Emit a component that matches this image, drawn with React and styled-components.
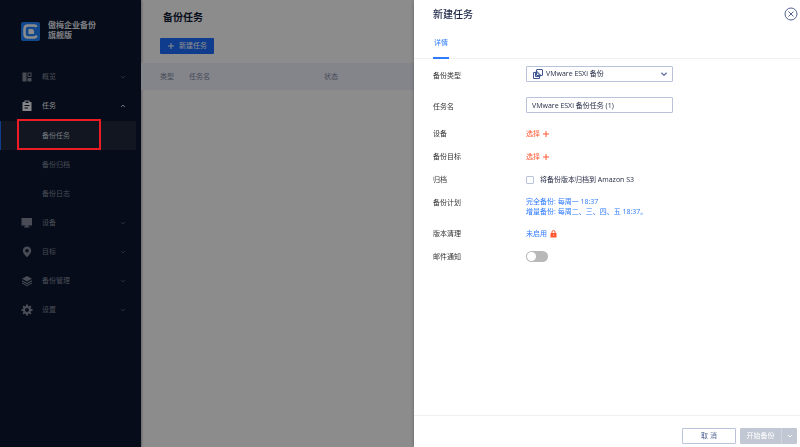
import React, {useState} from "react";
import styled, {createGlobalStyle} from "styled-components";


/* 侧边栏菜单 */
const menus = [
    { id : 'overview', name : '概览', icon : 'overview' },
    { id : 'task', name : '任务', icon : 'task', children : ['备份任务', '备份归档', '备份日志'] },
    { id : 'device', name : '设备', icon : 'device' },
    { id : 'target', name : '目标', icon : 'target' },
    { id : 'manage', name : '备份管理', icon : 'manage' },
    { id : 'setting', name : '设置', icon : 'setting' },
];


const MenuIcon = ({name}) => (
    <svg width="12" height="12" viewBox="0 0 24 24" fill="currentColor" aria-hidden="true">
        {name === 'overview' && (
            <>
                <path d="M3 3h8v18H3z"/>
                <path d="M13 3h8v9h-8zM15 5v5h4V5z" fillRule="evenodd"/>
                <path d="M13 14h8v7h-8z"/>
            </>
        )}
        {name === 'task' && (
            <path fillRule="evenodd" d="M3 4h4V1h10v3h4v18H3zM9 3v3h6V3zM7 10v2h10v-2zM7 15v2h7v-2z"/>
        )}
        {name === 'device' && (
            <path d="M1 2h21v15h-8v2h3v2H6v-2h3v-2H1z"/>
        )}
        {name === 'target' && (
            <path fillRule="evenodd" d="M12 1a8.500 8.500 0 0 0-8.500 8.500C3.500 15 12 22.500 12 22.500S20.500 15 20.500 9.500A8.500 8.500 0 0 0 12 1zm0 5a3.500 3.500 0 1 1 0 7 3.500 3.500 0 0 1 0-7z"/>
        )}
        {name === 'manage' && (
            <>
                <path d="M12 2 22 7.500 12 13 2 7.500z"/>
                <path d="M2 10.500 12 16 22 10.500v2.500L12 18.500 2 13z"/>
                <path d="M2 15 12 20.500 22 15v2L12 22.500 2 17z"/>
            </>
        )}
        {name === 'setting' && (
            <>
                <circle cx="12" cy="12" r="6" fill="none" stroke="currentColor" strokeWidth="4"/>
                <path d="M12 1v4M12 19v4M1 12h4M19 12h4M4.200 4.200l3 3M16.800 16.800l3 3M4.200 19.800l3-3M16.800 7.200l3-3" fill="none" stroke="currentColor" strokeWidth="4"/>
            </>
        )}
    </svg>
);

const Chevron = ({up, size = 6}) => (
    <svg width={size} height={size} viewBox="0 0 12 12" fill="none" stroke="currentColor" strokeWidth="2" aria-hidden="true">
        <path d={up ? "M2 8l4-4 4 4" : "M2 4l4 4 4-4"}/>
    </svg>
);

const Plus = () => (
    <svg width="8" height="8" viewBox="0 0 8 8" fill="none" stroke="currentColor" aria-hidden="true">
        <path d="M4 1v6M1 4h6"/>
    </svg>
);


const Sidebar = ({current, onSelect}) => (
    <SidebarBox>
        <Brand>
            <svg width="19" height="19" viewBox="0 0 38 38" aria-hidden="true">
                <rect width="38" height="38" rx="4" fill="#1f86ff"/>
                <path d="M31 10Q30 7 26 7H14Q7 7 7 14v10q0 7 7 7h12q4 0 5-4" fill="none" stroke="#fff" strokeWidth="5"/>
                <path d="M15 14h8l3 3v7H15z" fill="#fff"/>
            </svg>
            <BrandName>
                <span>傲梅企业备份</span>
                <span>旗舰版</span>
            </BrandName>
        </Brand>
        <nav>
            {menus.map((menu) => (
                <React.Fragment key={menu.id}>
                    <MenuButton type="button" $open={!!menu.children}>
                        <MenuIcon name={menu.icon}/>
                        <span>{menu.name}</span>
                        <Chevron up={!!menu.children}/>
                    </MenuButton>
                    {menu.children && (
                        <SubMenu>
                            {menu.children.map((child) => (
                                <SubItem key={child}>
                                    <SubLink href="#" $active={child === current} onClick={() => onSelect(child)}>{child}</SubLink>
                                    {child === '备份任务' && <Highlight/>}
                                </SubItem>
                            ))}
                        </SubMenu>
                    )}
                </React.Fragment>
            ))}
        </nav>
    </SidebarBox>
);


const TaskList = () => (
    <Main>
        <PageTitle>备份任务</PageTitle>
        <NewTaskButton type="button"><Plus/>新建任务</NewTaskButton>
        <TaskTable>
            <thead>
                <tr>
                    <TypeCell>类型</TypeCell>
                    <NameCell>任务名</NameCell>
                    <th>状态</th>
                </tr>
            </thead>
        </TaskTable>
    </Main>
);


const NewTaskDrawer = () => {

    const [taskName, setTaskName] = useState('VMware ESXi 备份任务 (1)');
    const [archive, setArchive] = useState(false);
    const [mailNotice, setMailNotice] = useState(false);

    return(
        <Drawer role="dialog" aria-labelledby="drawerTitle">
            <DrawerHeader>
                <DrawerTitle id="drawerTitle">新建任务</DrawerTitle>
                <CloseButton type="button" aria-label="关闭">
                    <svg width="14" height="14" viewBox="0 0 28 28" fill="none" stroke="currentColor" strokeWidth="2">
                        <circle cx="14" cy="14" r="12"/>
                        <path d="M9 9l10 10M19 9L9 19"/>
                    </svg>
                </CloseButton>
            </DrawerHeader>
            <Tabs>
                <Tab type="button">详情</Tab>
            </Tabs>

            <FormBody id="taskForm">
                <FieldRow>
                    <Label htmlFor="backupType">备份类型</Label>
                    <SelectWrapper>
                        <TypeIcon width="10" height="10" viewBox="0 0 20 20" fill="none" stroke="currentColor" strokeWidth="2">
                            <rect x="7" y="1" width="12" height="12" rx="1"/>
                            <path d="M4 7H1v12h12v-3"/>
                            <path d="M10 6H5v9h9v-5h-4z"/>
                        </TypeIcon>
                        <Select id="backupType" defaultValue="esxi">
                            <option value="esxi">VMware ESXi 备份</option>
                        </Select>
                        <SelectArrow><Chevron size={8}/></SelectArrow>
                    </SelectWrapper>
                </FieldRow>
                <FieldRow>
                    <Label htmlFor="taskName">任务名</Label>
                    <TextInput id="taskName" value={taskName} onChange={(e) => setTaskName(e.target.value)}/>
                </FieldRow>
                <Row>
                    <Label as="span">设备</Label>
                    <ChooseButton type="button">选择<Plus/></ChooseButton>
                </Row>
                <Row>
                    <Label as="span">备份目标</Label>
                    <ChooseButton type="button">选择<Plus/></ChooseButton>
                </Row>
                <Row>
                    <Label as="span">归档</Label>
                    <CheckLabel htmlFor="archive">
                        <CheckBox id="archive" type="checkbox" checked={archive} onChange={(e) => setArchive(e.target.checked)}/>
                        将备份版本归档到 Amazon S3
                    </CheckLabel>
                </Row>
                <Row>
                    <Label as="span">备份计划</Label>
                    <ScheduleLink href="#">
                        完全备份: 每周一 18:37<br/>
                        增量备份: 每周二、三、四、五 18:37。
                    </ScheduleLink>
                </Row>
                <Row>
                    <Label as="span">版本清理</Label>
                    <CleanLink href="#">
                        未启用
                        <svg width="7" height="8" viewBox="0 0 14 16" aria-hidden="true">
                            <path d="M4 7V4a3 3 0 0 1 6 0v3" fill="none" stroke="#ff5630" strokeWidth="2"/>
                            <rect x="1" y="6" width="12" height="9" rx="1" fill="#ff5630"/>
                            <path d="M7 9v3" stroke="#fff" strokeWidth="1"/>
                        </svg>
                    </CleanLink>
                </Row>
                <Row>
                    <Label htmlFor="mailNotice">邮件通知</Label>
                    <Switch id="mailNotice" type="checkbox" role="switch" checked={mailNotice} onChange={(e) => setMailNotice(e.target.checked)}/>
                </Row>
            </FormBody>

            <DrawerFooter>
                <CancelButton type="button">取 消</CancelButton>
                <StartGroup>
                    <StartButton type="button" disabled>开始备份</StartButton>
                    <StartMore type="button" disabled aria-label="更多"><Chevron/></StartMore>
                </StartGroup>
            </DrawerFooter>
        </Drawer>
    )
}


const App = () => {

    const [current, setCurrent] = useState('备份任务');

    return(
        <>
            <GlobalStyle/>
            <Layout>
                <Sidebar current={current} onSelect={setCurrent}/>
                <TaskList/>
            </Layout>
            <Mask/>
            <NewTaskDrawer/>
        </>
    )
}


const GlobalStyle = createGlobalStyle`
  * { box-sizing: border-box; }
  body {
    margin: 0;
    font-family: "Open Sans", "Noto Sans CJK SC", sans-serif;
    font-size: 7px;
    line-height: 12px;
    color: #262d45;
  }
  button, input, select { font: inherit; color: inherit; margin: 0; }
  button { border: 0; padding: 0; background: none; cursor: pointer; }
  a { text-decoration: none; }
  svg { display: block; flex: none; }
`

const Layout = styled.div`
  display: flex;
  min-height: 100vh;
`

/* 侧边栏 */
const SidebarBox = styled.aside`
  flex: none;
  width: 141px;
  background: #0b1630;
  box-shadow: 0 0 3px rgba(0, 0, 0, 0.5);
`

const Brand = styled.div`
  display: flex;
  align-items: center;
  gap: 8px;
  height: 62px;
  padding: 0 21px;
`

const BrandName = styled.strong`
  display: flex;
  flex-direction: column;
  padding-bottom: 2px;
  font-family: "Noto Sans CJK SC", sans-serif;
  font-size: 8px;
  line-height: 10px;
  color: #e6e8ee;
`

const MenuButton = styled.button`
  display: grid;
  grid-template-columns: 12px 1fr 6px;
  align-items: center;
  gap: 9px;
  width: 100%;
  height: 29px;
  padding: 0 15px 0 21px;
  text-align: left;
  color: ${(props) => props.$open ? '#f4f5f8' : '#858b9b'};

  svg:last-child { color: ${(props) => props.$open ? '#d0d3da' : '#4d556c'}; }
`

const SubMenu = styled.ul`
  list-style: none;
  margin: 0;
  padding: 1px 5px 0 0;
`

const SubItem = styled.li`
  position: relative;
`

const SubLink = styled.a`
  display: flex;
  align-items: center;
  height: 29px;
  padding-left: 41px;
  border-left: 1px solid ${(props) => props.$active ? '#1c6eff' : 'transparent'};
  background: ${(props) => props.$active ? '#1f293d' : 'transparent'};
  color: ${(props) => props.$active ? '#d5d8e0' : '#858b9b'};
`

/* 当前菜单的红框，显示在遮罩之上 */
const Highlight = styled.span`
  position: absolute;
  z-index: 20;
  top: -2px;
  left: 17px;
  width: 84px;
  height: 31px;
  border: 2px solid #ed1c24;
  pointer-events: none;
`

/* 任务列表 */
const Main = styled.main`
  flex: 1;
  min-width: 0;
`

const PageTitle = styled.h1`
  margin: 0;
  padding: 10px 22px;
  font-size: 10px;
  line-height: 14px;
  color: #101935;
`

const NewTaskButton = styled.button`
  display: flex;
  align-items: center;
  gap: 4px;
  height: 16px;
  margin: 4px 19px 9px;
  padding: 0 7px;
  border-radius: 1px;
  background: #1c6eff;
  color: #fff;
`

const TaskTable = styled.table`
  width: 100%;
  border-collapse: collapse;
  table-layout: fixed;

  tr { height: 27px; background: #f0f3fd; }
  th {
    padding: 0;
    text-align: left;
    font-weight: 400;
    color: #7d869f;
  }
`

const TypeCell = styled.th`
  width: 48px;
  && { padding-left: 19px; }
`

const NameCell = styled.th`
  width: 135px;
`

const Mask = styled.div`
  position: fixed;
  z-index: 10;
  inset: 0;
  background: rgba(0, 0, 0, 0.45);
`

/* 新建任务抽屉 */
const Drawer = styled.section`
  position: fixed;
  z-index: 30;
  top: 0;
  right: 0;
  bottom: 0;
  left: 414px;
  display: flex;
  flex-direction: column;
  background: #fff;
  box-shadow: 0 0 4px rgba(0, 0, 0, 0.3);
`

const DrawerHeader = styled.header`
  display: flex;
  align-items: center;
  justify-content: space-between;
  height: 28px;
  padding: 0 2px 0 19px;
`

const DrawerTitle = styled.h2`
  margin: 0;
  font-size: 10px;
  line-height: 14px;
  font-weight: 500;
  color: #1a2444;
`

const CloseButton = styled.button`
  color: #536494;
`

const Tabs = styled.div`
  display: flex;
  height: 31px;
  padding: 0 19px;
  border-bottom: 1px solid #eef0f3;
`

const Tab = styled.button`
  height: 31px;
  padding: 0 1px;
  border-bottom: 2px solid #2f7bff;
  color: #2f7bff;
`

const FormBody = styled.form`
  display: flex;
  flex: 1;
  flex-direction: column;
  gap: 11px;
  padding: 7px 19px;
`

const Row = styled.div`
  display: grid;
  grid-template-columns: 93px 1fr;
  align-items: start;
`

const FieldRow = styled(Row)`
  grid-template-columns: 93px 147px;
  align-items: end;
  margin-bottom: 4px;
`

const Label = styled.label`
  color: #333;
`

const SelectWrapper = styled.div`
  position: relative;
`

const TypeIcon = styled.svg`
  position: absolute;
  top: 3px;
  left: 7px;
  color: #3f5691;
  pointer-events: none;
`

const SelectArrow = styled.span`
  position: absolute;
  top: 4px;
  right: 5px;
  color: #6b7ba6;
  pointer-events: none;
`

const Select = styled.select`
  display: block;
  appearance: none;
  width: 100%;
  height: 16px;
  padding: 0 16px 0 19px;
  border: 1px solid #b9c3dc;
  border-radius: 1px;
  background: #fff;
  color: #262d45;
`

const TextInput = styled.input`
  width: 100%;
  height: 16px;
  padding: 0 5px;
  border: 1px solid #b9c3dc;
  border-radius: 1px;
  background: #fff;
`

const ChooseButton = styled.button`
  display: flex;
  align-items: center;
  gap: 2px;
  justify-self: start;
  color: #ff5630;
`

const CheckLabel = styled.label`
  display: flex;
  align-items: center;
  gap: 6px;
`

const CheckBox = styled.input`
  appearance: none;
  width: 8px;
  height: 8px;
  border: 1px solid #b9c3dc;
  border-radius: 1px;

  &:checked { background: #2f7bff; }
`

const ScheduleLink = styled.a`
  line-height: 10px;
  color: #2f7bff;
`

const CleanLink = styled.a`
  display: flex;
  align-items: center;
  gap: 3px;
  color: #2f7bff;
`

const Switch = styled.input`
  appearance: none;
  display: flex;
  align-items: center;
  width: 22px;
  height: 11px;
  padding: 1px;
  border-radius: 6px;
  background: #b8b8b8;

  &::before {
    content: "";
    width: 9px;
    height: 9px;
    border-radius: 50%;
    background: #fff;
  }
  &:checked { justify-content: flex-end; background: #2f7bff; }
`

const DrawerFooter = styled.footer`
  display: flex;
  justify-content: flex-end;
  gap: 4px;
  padding: 12px 3px 3px;
  border-top: 1px solid #eef0f3;
`

const CancelButton = styled.button`
  width: 54px;
  height: 16px;
  border: 1px solid #b9c3dc;
  border-radius: 1px;
  color: #536494;
`

const StartGroup = styled.div`
  display: flex;
  border-radius: 1px;
  background: #c2c8d3;
  color: #fff;
`

const StartButton = styled.button`
  width: 41px;
`

const StartMore = styled.button`
  display: flex;
  align-items: center;
  justify-content: center;
  width: 16px;
  border-left: 1px solid #cfd4dd;
`


export default App;
